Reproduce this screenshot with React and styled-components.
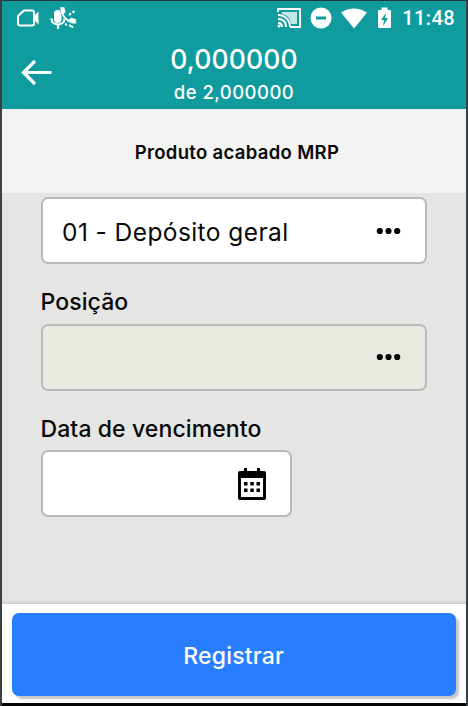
import React from "react";
import styled, { createGlobalStyle } from "styled-components";

const GlobalStyle = createGlobalStyle`
  * { box-sizing: border-box; }
  body { margin: 0; background: #3a4044; }
  button { font: inherit; }
`;

const Screen = styled.main`
  width: 468px;
  height: 706px;
  display: flex;
  flex-direction: column;
  overflow: hidden;
  border: solid #3a4044;
  border-width: 1px 2px 0;
  border-top-color: #26363a;
  background: #e5e5e4;
  color: #080808;
  font-family: Inter, sans-serif;
`;

const Header = styled.header`
  flex: 0 0 108px;
  background: #109c9e;
  color: #fff;
`;

const StatusBar = styled.div`
  height: 34px;
  display: flex;
  align-items: center;
  justify-content: space-between;
  padding: 0 11px 0 14px;
`;

const StatusGroup = styled.div`
  display: flex;
  align-items: center;
  height: 34px;
`;

const Icon = styled.svg`
  display: block;
  flex: none;
  margin-right: ${({ $gap }) => $gap || 0}px;
`;

const Clock = styled.time`
  font: 500 20px/34px Roboto, sans-serif;
  letter-spacing: 0.4px;
`;

const TitleBar = styled.div`
  height: 74px;
  display: grid;
  grid-template-columns: 70px 1fr 70px;
`;

const BackButton = styled.button`
  width: 70px;
  height: 74px;
  padding: 0;
  border: 0;
  background: none;
  color: inherit;
`;

const Quantity = styled.div`
  display: flex;
  flex-direction: column;
  align-items: center;
  padding-top: 8px;
`;

const Current = styled.strong`
  font-size: 26.5px;
  line-height: 32px;
  font-weight: 500;
  letter-spacing: 0.15px;
`;

const Total = styled.span`
  font-size: 18.5px;
  line-height: 24px;
  font-weight: 500;
  margin-top: 5px;
  letter-spacing: 0.45px;
`;

const Product = styled.h1`
  flex: 0 0 84px;
  margin: 0;
  padding: 2px 0 0 6px;
  background: #f3f3f2;
  font-size: 18.5px;
  line-height: 82px;
  font-weight: 600;
  letter-spacing: 0.32px;
  text-align: center;
`;

const Form = styled.form`
  flex: 1;
  min-height: 0;
  padding: 4px 39px 0 38.5px;
  background: linear-gradient(to top, #c6c6c6 0, #dededd 2px, #e5e5e4 5px);
`;

const Field = styled.div`
  width: ${({ $width }) => $width || "386.5px"};
  height: 67px;
  display: flex;
  align-items: center;
  justify-content: space-between;
  padding: 0 24px 0 19.5px;
  border: 2px solid #b8b9ba;
  border-radius: 7px;
  background: ${({ $disabled }) => ($disabled ? "#e8e9e0" : "#fff")};
`;

const Value = styled.span`
  padding-top: 2px;
  font-size: 24.5px;
  line-height: 32px;
  letter-spacing: 0.42px;
`;

const Label = styled.label`
  display: block;
  height: 59.5px;
  padding-top: 22px;
  font-size: 23px;
  line-height: 32px;
  font-weight: 500;
  letter-spacing: 0.1px;
`;

const Footer = styled.footer`
  flex: 0 0 102px;
  padding: 9px 10px 0 9.5px;
  background: #fff;
  border-bottom: 3px solid #050505;
`;

const Submit = styled.button`
  width: 444.5px;
  height: 83px;
  display: block;
  padding: 3px 0 0;
  border: 0;
  border-radius: 7px;
  background: #287eff;
  box-shadow: 3px 3px 2px #c8c8c8;
  color: #fff;
  font-size: 23px;
  font-weight: 500;
  letter-spacing: 0.2px;
`;

function Dots() {
  return (
    <Icon width="25" height="8" viewBox="0 0 25 8" fill="#000">
      <circle cx="3.8" cy="4" r="3.1" />
      <circle cx="12.5" cy="4" r="3.1" />
      <circle cx="21.2" cy="4" r="3.1" />
    </Icon>
  );
}

export default function App() {
  return (
    <Screen>
      <GlobalStyle />
      <Header>
        <StatusBar>
          <StatusGroup>
            <Icon $gap={10} width="24" height="20" viewBox="0 0 24 20" fill="none">
              <path d="M8 2.5h8q2 0 2 2v11q0 2-2 2H4q-2 0-2-2V8z" stroke="#fff" strokeWidth="2" strokeLinejoin="round" />
              <path d="m17.5 8.5 5-5v13l-5-5z" fill="#fff" />
            </Icon>
            <Icon width="27" height="24" viewBox="0 0 27 24" fill="none" stroke="#fff">
              <rect x="4" y="4" width="7.5" height="13" rx="3.7" fill="#fff" stroke="none" />
              <path d="M1.5 12.5c0 8 13 8 13 0M8 18v5" strokeWidth="2.2" />
              <path d="M10 1h4.5l1.3 5-2 2.2c1 2.3 2.7 4 5 5.2l2.4-2 5 1.6V18C17 18 10 11 10 1z" fill="#fff" stroke="#109c9e" strokeWidth=".5" />
              <path d="m19 9 2-1.6m1.5-.8L24.5 5M15 18l2 1m2 0 4 2.4" strokeWidth="2" />
            </Icon>
          </StatusGroup>
          <StatusGroup>
            <Icon $gap={8} width="25" height="22" viewBox="0 0 25 22" fill="none" stroke="#fff">
              <path d="M1 5V2h22v18H13" strokeWidth="2" />
              <path d="M5 5h15v12h-6c-1-6-4-9-9-10z" fill="#fff" stroke="none" opacity=".75" />
              <path d="M1 8c7 0 12 5 12 12M1 12c5 0 8 3 8 8M1 16c3 0 4 1 4 4" strokeWidth="2" />
              <circle cx="2" cy="19" r="1.5" fill="#fff" stroke="none" />
            </Icon>
            <Icon $gap={9} width="22" height="22" viewBox="0 0 22 22">
              <circle cx="11" cy="11" r="10.5" fill="#fff" />
              <path d="M6 11h10" stroke="#109c9e" strokeWidth="3" />
            </Icon>
            <Icon $gap={11} width="26" height="21" viewBox="0 0 26 21" fill="#fff">
              <path d="M0 4.5Q13-3.5 26 4.5L13 20.5z" />
            </Icon>
            <Icon $gap={11} width="13" height="22" viewBox="0 0 13 22">
              <path d="M3.5 3V.5h6V3H12q1 0 1 1v16q0 1-1 1H1q-1 0-1-1V4q0-1 1-1z" fill="#fff" />
              <path d="M8 6 3 13h3l-1 6 5-8H7z" fill="#109c9e" />
            </Icon>
            <Clock>11:48</Clock>
          </StatusGroup>
        </StatusBar>
        <TitleBar>
          <BackButton aria-label="Voltar">
            <svg width="70" height="74" viewBox="0 0 70 74" fill="none" stroke="#fff" strokeWidth="3.2">
              <path d="M22 37.5h27.5M33 26 21.5 37.5 33 49" />
            </svg>
          </BackButton>
          <Quantity>
            <Current>0,000000</Current>
            <Total>de 2,000000</Total>
          </Quantity>
        </TitleBar>
      </Header>
      <Product>Produto acabado MRP</Product>
      <Form>
        <Field>
          <Value>01 - Depósito geral</Value>
          <Dots />
        </Field>
        <Label>Posição</Label>
        <Field $disabled>
          <span />
          <Dots />
        </Field>
        <Label>Data de vencimento</Label>
        <Field $width="251.5px">
          <span />
          <svg width="28" height="32" viewBox="0 0 28 32" fill="#000">
            <path fillRule="evenodd" d="M6 0h3v3h10V0h3v3h4q2 0 2 2v25q0 2-2 2H2q-2 0-2-2V5q0-2 2-2h4zM3 10v19h22V10z" />
            <path d="M6 14h3.5v3.5H6zm6.3 0h3.5v3.5h-3.5zm6.2 0H22v3.5h-3.5zM6 20.5h3.5V24H6zm6.3 0h3.5V24h-3.5zm6.2 0H22V24h-3.5z" />
          </svg>
        </Field>
      </Form>
      <Footer>
        <Submit type="button">Registrar</Submit>
      </Footer>
    </Screen>
  );
}
